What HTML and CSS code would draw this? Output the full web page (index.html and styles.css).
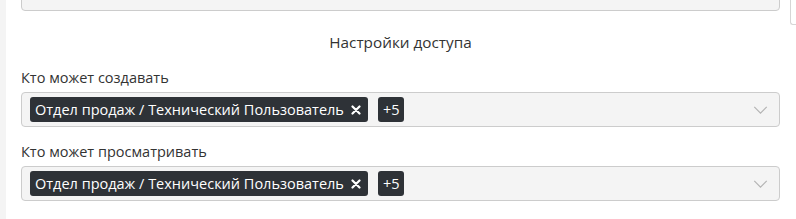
FILE: index.html
```html
<!DOCTYPE html>
<html lang="ru">
<head>
<meta charset="utf-8">
<link rel="stylesheet" href="styles.css">
</head>
<body>
<div class="page">
  <div class="strip"></div>
  <div class="main">
    <div class="select select-top"></div>
    <div class="title">Настройки доступа</div>
    <div class="field">
      <div class="label">Кто может создавать</div>
      <div class="select">
        <div class="tags">
          <span class="tag">Отдел продаж / Технический Пользователь<svg class="x" viewBox="0 0 10 10"><path d="M1.5 1.5 L8.5 8.5 M8.5 1.5 L1.5 8.5"/></svg></span>
          <span class="tag more">+5</span>
        </div>
        <svg class="chev" viewBox="0 0 16 9"><path d="M1 1 L8 8 L15 1"/></svg>
      </div>
    </div>
    <div class="field">
      <div class="label">Кто может просматривать</div>
      <div class="select">
        <div class="tags">
          <span class="tag">Отдел продаж / Технический Пользователь<svg class="x" viewBox="0 0 10 10"><path d="M1.5 1.5 L8.5 8.5 M8.5 1.5 L1.5 8.5"/></svg></span>
          <span class="tag more">+5</span>
        </div>
        <svg class="chev" viewBox="0 0 16 9"><path d="M1 1 L8 8 L15 1"/></svg>
      </div>
    </div>
  </div>
  <div class="side">
    <div class="side-box"></div>
  </div>
</div>
</body>
</html>
```

FILE: styles.css
```css
html, body {
  margin: 0;
  padding: 0;
  background: #ffffff;
}
body {
  font-family: "Open Sans", "Noto Sans", sans-serif;
  font-size: 14.5px;
  color: #333333;
  width: 796px;
  height: 219px;
  overflow: hidden;
}
.page {
  display: flex;
  height: 219px;
}
.strip {
  width: 6px;
  flex: none;
  background: #f4f4f4;
}
.main {
  flex: 1;
  padding: 0 0 0 15px;
  min-width: 0;
}
.side {
  width: 16px;
  flex: none;
  display: flex;
  justify-content: flex-end;
}
.side-box {
  width: 5px;
  height: 24px;
  border-left: 1px solid #d6d6d6;
  border-bottom: 1px solid #d6d6d6;
  border-bottom-left-radius: 3px;
}
.select {
  position: relative;
  box-sizing: border-box;
  height: 35px;
  background: #f4f4f4;
  border: 1px solid #cccccc;
  border-radius: 4px;
  display: flex;
  align-items: center;
  padding: 0 8px;
}
.select-top {
  height: 37px;
  margin-top: -26px;
}
.title {
  text-align: center;
  font-size: 15.3px;
  line-height: 20px;
  margin-top: 21px;
  color: #333;
}
.field {
  margin-top: 16px;
}
.field + .field {
  margin-top: 15px;
}
.label {
  line-height: 20px;
  margin-bottom: 4px;
}
.tags {
  display: flex;
  gap: 10px;
  flex: 1;
}
.tag {
  display: inline-flex;
  align-items: center;
  height: 25px;
  padding: 0 7px 0 5px;
  background: #2e3237;
  color: #ffffff;
  border-radius: 3px;
  font-size: 14.5px;
  gap: 7px;
}
.tag.more {
  padding: 0 5px;
}
.x {
  width: 10px;
  height: 10px;
  fill: none;
  stroke: #ffffff;
  stroke-width: 2.2;
  stroke-linecap: round;
}
.chev {
  width: 15px;
  height: 8px;
  fill: none;
  stroke: #b3b3b3;
  stroke-width: 1.3;
  margin-right: 3px;
}
```
